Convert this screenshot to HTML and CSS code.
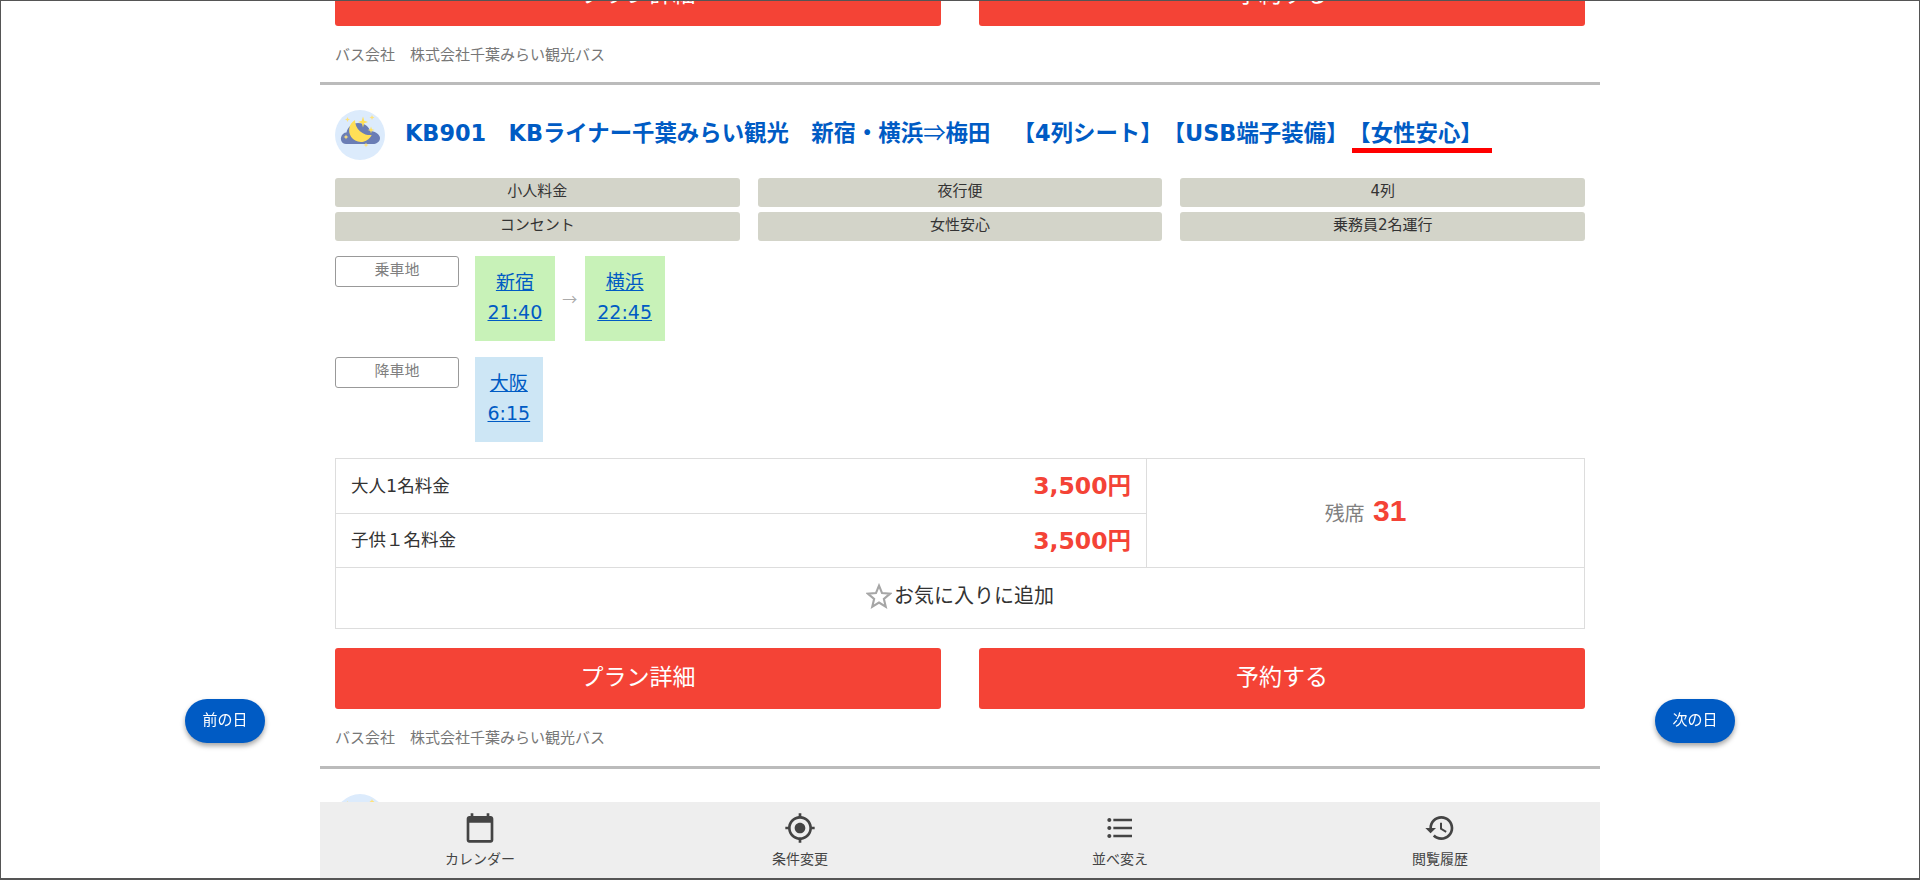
FILE: index.html
```html
<!DOCTYPE html>
<html lang="ja">
<head>
  <meta charset="UTF-8">
  <title>高速バス検索結果</title>
  <link rel="stylesheet" href="styles.css">
</head>
<body>

  <div class="container">

    <!-- Previous plan, scrolled mostly out of view -->
    <section class="plan plan-prev">
      <div class="plan-buttons">
        <a class="btn" href="#">プラン詳細</a>
        <a class="btn" href="#">予約する</a>
      </div>
      <p class="company">バス会社　株式会社千葉みらい観光バス</p>
    </section>

    <section class="plan">
      <div class="plan-title">
        <svg class="night-icon" viewBox="0 0 50 50">
          <circle cx="25" cy="25" r="25" fill="#dcebfc"/>
          <path d="M11 34C6.5 34 5.5 29.5 6 27.5 6.5 24.5 9 22.5 11.5 22.5 12.5 17 17.5 13 23 13 30 13 34 17 35 21 41 21 45 25 45 28 45 32 41 34 38 34Z" fill="#6a7db5"/>
          <path d="M20 10A11.8 11.8 0 1 0 36.7 25 15 15 0 0 1 20 10Z" fill="#ffdf57"/>
          <path d="M28 6.500 29.200 10.800 33 12 29.200 13.200 28 17.500 26.800 13.200 23 12 26.800 10.800Z" fill="#ffdf57"/>
          <path d="M36 16.500 36.800 19.200 39.500 20 36.800 20.800 36 23.500 35.200 20.800 32.500 20 35.200 19.200Z" fill="#ffdf57"/>
          <path d="M12.500 7 13.200 8.800 15 9.500 13.200 10.200 12.500 12 11.800 10.200 10 9.500 11.800 8.800Z" fill="#ffe27a"/>
          <path d="M37 5 37.700 6.800 39.500 7.500 37.700 8.200 37 10 36.300 8.200 34.500 7.500 36.300 6.800Z" fill="#ffe27a"/>
          <path d="M11 24.500 11.700 26.300 13.500 27 11.700 27.700 11 29.500 10.300 27.700 8.500 27 10.300 26.300Z" fill="#ffe27a"/>
          <path d="M31 32.500 31.700 34.300 33.500 35 31.700 35.700 31 37.500 30.300 35.700 28.500 35 30.300 34.300Z" fill="#ffe27a"/>
        </svg>
        <h2>KB901　KBライナー千葉みらい観光　新宿・横浜<span class="cjk">⇒</span>梅田　【4列シート】【USB端子装備】<span class="marked">【女性安心】</span></h2>
      </div>

      <ul class="tags">
        <li>小人料金</li>
        <li>夜行便</li>
        <li>4列</li>
        <li>コンセント</li>
        <li>女性安心</li>
        <li>乗務員2名運行</li>
      </ul>

      <div class="stops">
        <span class="stop-label">乗車地</span>
        <a class="stop stop-on" href="#">新宿<br>21:40</a>
        <span class="stop-arrow">→</span>
        <a class="stop stop-on" href="#">横浜<br>22:45</a>
      </div>
      <div class="stops">
        <span class="stop-label">降車地</span>
        <a class="stop stop-off" href="#">大阪<br>6:15</a>
      </div>

      <table class="fare">
        <tr class="fare-row-adult">
          <th>大人1名料金</th>
          <td class="price">3,500円</td>
          <td class="seats" rowspan="2">残席 <b>31</b></td>
        </tr>
        <tr class="fare-row-child">
          <th>子供１名料金</th>
          <td class="price">3,500円</td>
        </tr>
        <tr class="fare-row-fav">
          <td class="favorite" colspan="3">
            <svg class="star" viewBox="0 0 24 24">
              <path d="M12 2.500 14.800 9.300 22.100 9.900 16.500 14.700 18.200 21.800 12 18 5.800 21.800 7.500 14.700 1.900 9.900 9.200 9.300Z" fill="none" stroke="#a6a6a6" stroke-width="2"/>
            </svg>お気に入りに追加
          </td>
        </tr>
      </table>

      <div class="plan-buttons">
        <a class="btn" href="#">プラン詳細</a>
        <a class="btn" href="#">予約する</a>
      </div>
      <p class="company">バス会社　株式会社千葉みらい観光バス</p>
    </section>

    <!-- Next plan, hidden behind the bottom menu -->
    <section class="plan">
      <div class="plan-title">
        <svg class="night-icon" viewBox="0 0 50 50">
          <circle cx="25" cy="25" r="25" fill="#dcebfc"/>
          <path d="M12.500 7 13.200 8.800 15 9.500 13.200 10.200 12.500 12 11.800 10.200 10 9.500 11.800 8.800Z" fill="#ffe27a"/>
          <path d="M37 5 37.700 6.800 39.500 7.500 37.700 8.200 37 10 36.300 8.200 34.500 7.500 36.300 6.800Z" fill="#ffe27a"/>
        </svg>
      </div>
    </section>
  </div>

  <a class="day-btn day-prev" href="#">前の日</a>
  <a class="day-btn day-next" href="#">次の日</a>

  <nav class="bottom-menu">
    <a class="menu-item" href="#">
      <svg viewBox="0 0 24 24"><path d="M20 3h-1V1h-2v2H7V1H5v2H4c-1.100 0-2 .9-2 2v16c0 1.100.9 2 2 2h16c1.100 0 2-.9 2-2V5c0-1.100-.9-2-2-2zm0 18H4V8h16v13z"/></svg>
      カレンダー
    </a>
    <a class="menu-item" href="#">
      <svg viewBox="0 0 24 24"><path d="M12 8c-2.210 0-4 1.790-4 4s1.790 4 4 4 4-1.790 4-4-1.790-4-4-4zm8.940 3c-.46-4.170-3.770-7.480-7.940-7.940V1h-2v2.060C6.830 3.520 3.520 6.830 3.060 11H1v2h2.060c.46 4.170 3.770 7.480 7.940 7.940V23h2v-2.060c4.170-.46 7.480-3.770 7.940-7.940H23v-2h-2.060zM12 19c-3.870 0-7-3.130-7-7s3.130-7 7-7 7 3.130 7 7-3.130 7-7 7z"/></svg>
      条件変更
    </a>
    <a class="menu-item" href="#">
      <svg viewBox="0 0 24 24"><path d="M4 10.500c-.83 0-1.500.67-1.500 1.500s.67 1.500 1.500 1.500 1.500-.67 1.500-1.500-.67-1.500-1.500-1.500zm0-6c-.83 0-1.500.67-1.500 1.500S3.170 7.500 4 7.500 5.500 6.830 5.500 6 4.830 4.500 4 4.500zm0 12c-.83 0-1.500.68-1.500 1.500s.68 1.500 1.500 1.500 1.500-.68 1.500-1.500-.67-1.500-1.500-1.500zM7 19h14v-2H7v2zm0-6h14v-2H7v2zm0-8v2h14V5H7z"/></svg>
      並べ変え
    </a>
    <a class="menu-item" href="#">
      <svg viewBox="0 0 24 24"><path d="M13 3c-4.970 0-9 4.030-9 9H1l3.890 3.890.07.14L9 12H6c0-3.870 3.130-7 7-7s7 3.130 7 7-3.130 7-7 7c-1.930 0-3.680-.79-4.940-2.060l-1.420 1.420C8.270 19.990 10.510 21 13 21c4.970 0 9-4.030 9-9s-4.030-9-9-9zm-1 5v5l4.280 2.540.72-1.210-3.500-2.080V8H12z"/></svg>
      閲覧履歴
    </a>
  </nav>

</body>
</html>
```

FILE: styles.css
```css
* {
  box-sizing: border-box;
}

html, body {
  height: 880px;
}

body {
  margin: 0;
  overflow: hidden;
  border: 1px solid #555;
  border-bottom-width: 2px;
  background-color: #fff;
  color: #333;
  font-family: "DejaVu Sans", "Noto Sans CJK JP", sans-serif;
  text-spacing-trim: space-all;
  font-feature-settings: "chws" 0, "palt" 0;
}

a {
  color: #005bc4;
}

.cjk {
  font-family: "Noto Sans CJK JP", sans-serif;
  font-weight: normal;
}

.container {
  width: 1280px;
  margin: -55px auto 0;
}

.plan {
  padding: 25px 15px 0;
  border-bottom: 3px solid #bbb;
}

.plan-prev {
  padding-top: 0;
}

.plan-prev .company {
  margin-bottom: 17px;
}

/* Title */
.plan-title {
  display: flex;
  align-items: center;
  gap: 20px;
  height: 50px;
  margin-bottom: 18px;
}

.night-icon {
  flex: none;
  width: 50px;
  height: 50px;
}

.plan-title h2 {
  margin: 0 0 9px;
  color: #005bc4;
  font-size: 22.400px;
  font-weight: bold;
  white-space: nowrap;
}

.marked {
  position: relative;
}

/* red line marked on top of the title */
.marked::after {
  content: "";
  position: absolute;
  left: 4px;
  bottom: -7px;
  width: 140px;
  height: 5px;
  background-color: #f00;
}

/* Tags */
.tags {
  display: grid;
  grid-template-columns: repeat(3, 1fr);
  gap: 5px 18px;
  margin: 0 0 15px;
  padding: 0;
  list-style: none;
}

.tags li {
  height: 29px;
  border-radius: 3px;
  background-color: #d3d4c9;
  font-size: 15px;
  line-height: 27px;
  text-align: center;
}

/* Boarding and alighting stops */
.stops {
  display: flex;
  align-items: center;
  margin-bottom: 16px;
}

.stop-label {
  align-self: flex-start;
  width: 124px;
  height: 31px;
  margin-right: 16px;
  border: 1px solid #999;
  border-radius: 3px;
  color: #808080;
  font-size: 15px;
  line-height: 27px;
  text-align: center;
}

.stop {
  height: 85px;
  padding: 11px 12.500px 0;
  font-size: 19px;
  line-height: 30px;
  text-align: center;
}

.stop-on {
  background-color: #c8f2b8;
}

.stop-off {
  background-color: #cde6f5;
}

.stop-arrow {
  width: 30px;
  color: #aaa;
  font-family: "Noto Sans CJK JP", sans-serif;
  font-size: 15px;
  text-align: center;
}

/* Fare table */
.fare {
  width: 100%;
  border-collapse: collapse;
  table-layout: fixed;
}

.fare th,
.fare td {
  padding: 0 0 4px;
  border: 1px solid #ddd;
}

.fare-row-adult {
  height: 55px;
}

.fare-row-child {
  height: 54px;
}

.fare-row-fav {
  height: 61px;
}

.fare th {
  width: 500px;
  padding-left: 15px;
  border-right: 0;
  font-size: 17.500px;
  font-weight: normal;
  text-align: left;
}

.fare .price {
  padding-right: 15px;
  border-left: 0;
  color: #f44336;
  font-size: 23.500px;
  font-weight: bold;
  text-align: right;
}

.seats {
  width: 438px;
  color: #808080;
  font-size: 20px;
  text-align: center;
}

.seats b {
  margin-left: 2px;
  color: #f44336;
  font-family: "Liberation Sans", sans-serif;
  font-size: 30px;
}

.fare .favorite {
  padding-bottom: 7px;
  font-size: 20px;
  text-align: center;
}

.star {
  width: 26px;
  height: 26px;
  margin-right: 2px;
  vertical-align: -6px;
}

/* Buttons */
.plan-buttons {
  display: grid;
  grid-template-columns: 606px 606px;
  justify-content: space-between;
  margin-top: 19px;
}

.btn {
  height: 61px;
  border-radius: 3px;
  background-color: #f44336;
  color: #fff;
  font-size: 23px;
  line-height: 58px;
  text-align: center;
  text-decoration: none;
}

.company {
  margin: 19px 0 18px;
  color: #777;
  font-size: 15px;
  line-height: 20px;
}

/* Previous and next day */
.day-btn {
  position: fixed;
  top: 699px;
  width: 80px;
  height: 44px;
  border-radius: 22px;
  background-color: #005bc4;
  box-shadow: 0 3px 5px rgba(0, 0, 0, 0.35);
  color: #fff;
  font-size: 15px;
  line-height: 42px;
  text-align: center;
  text-decoration: none;
}

.day-prev {
  left: 185px;
}

.day-next {
  left: 1655px;
}

/* Bottom menu */
.bottom-menu {
  position: fixed;
  left: 320px;
  bottom: 2px;
  display: grid;
  grid-template-columns: repeat(4, 1fr);
  width: 1280px;
  height: 76px;
  background-color: #eee;
}

.menu-item {
  display: flex;
  flex-direction: column;
  align-items: center;
  padding-top: 10px;
  color: #444;
  font-size: 14px;
  line-height: 20px;
  text-decoration: none;
}

.menu-item svg {
  width: 32px;
  height: 32px;
  margin-bottom: 5px;
  fill: #444;
}
```
